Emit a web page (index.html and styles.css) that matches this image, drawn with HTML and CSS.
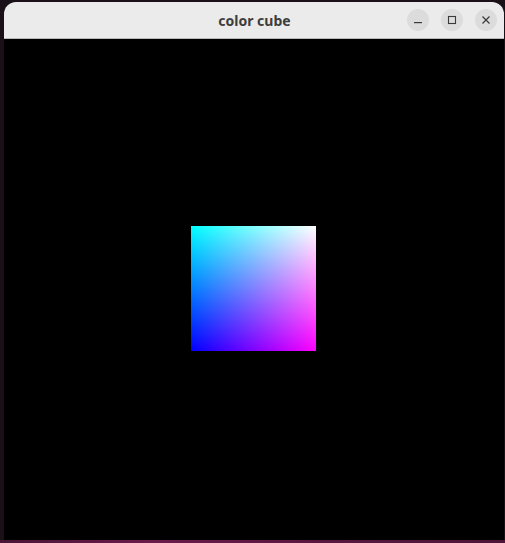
FILE: index.html
```html
<!DOCTYPE html>
<html>
<head>
<meta charset="utf-8">
<link rel="stylesheet" href="styles.css">
</head>
<body>
<div class="desktop">
  <div class="window">
    <div class="titlebar">
      <div class="title">color cube</div>
      <div class="controls">
        <div class="btn">
          <svg width="10" height="10" viewBox="0 0 10 10"><rect x="1" y="7" width="8" height="1.2" fill="#3a3a3a"/></svg>
        </div>
        <div class="btn">
          <svg width="10" height="10" viewBox="0 0 10 10"><rect x="1.5" y="1.5" width="7" height="7" fill="none" stroke="#3a3a3a" stroke-width="1.1"/></svg>
        </div>
        <div class="btn">
          <svg width="10" height="10" viewBox="0 0 10 10"><path d="M1.5 1.5 L8.5 8.5 M8.5 1.5 L1.5 8.5" stroke="#3a3a3a" stroke-width="1.2"/></svg>
        </div>
      </div>
    </div>
    <div class="canvas">
      <div class="cube"></div>
    </div>
  </div>
  <div class="floor"></div>
</div>
</body>
</html>
```
FILE: styles.css
```css
html, body {
  margin: 0;
  padding: 0;
  width: 505px;
  height: 543px;
  overflow: hidden;
  background: #1a1118;
}
.desktop {
  display: flex;
  flex-direction: column;
  width: 505px;
  height: 543px;
}
.window {
  margin: 2px 1px 0 4px;
  width: 500px;
  height: 538px;
  display: flex;
  flex-direction: column;
  border-radius: 12px 12px 0 0;
  overflow: hidden;
  background: #000;
}
.titlebar {
  height: 36px;
  flex: none;
  background: #ebebeb;
  border-bottom: 1px solid #b9b9b9;
  position: relative;
  display: flex;
  align-items: center;
  justify-content: center;
}
.title {
  font-family: "Noto Sans", "DejaVu Sans", sans-serif;
  font-weight: 700;
  font-size: 14px;
  color: #3d3d3d;
  margin-left: 1px;
}
.controls {
  position: absolute;
  right: 7px;
  top: 7px;
  display: flex;
  gap: 12px;
}
.btn {
  width: 22px;
  height: 22px;
  border-radius: 50%;
  background: #dcdcdc;
  display: flex;
  align-items: center;
  justify-content: center;
}
.canvas {
  flex: 1;
  background: #000;
  display: flex;
  align-items: center;
  justify-content: center;
}
.cube {
  width: 125px;
  height: 125px;
  margin-left: -1px;
  margin-bottom: 2px;
  background-image: linear-gradient(to bottom, #00ff00, #000000), linear-gradient(to right, #0000ff, #ff00ff);
  background-blend-mode: screen;
}
.floor {
  flex: 1;
  background: linear-gradient(to right, #4a1535, #6a1b4b 30%, #5a1840 60%, #4e1538);
}
```
